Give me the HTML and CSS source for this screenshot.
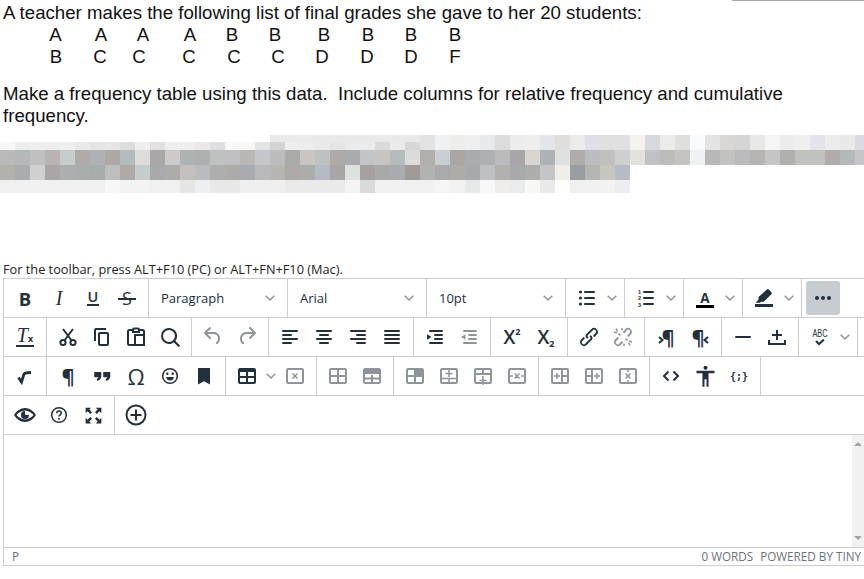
FILE: index.html
```html
<!DOCTYPE html>
<html lang="en">
<head>
<meta charset="utf-8">
<title>Frequency table question</title>
<link rel="stylesheet" href="styles.css">
</head>
<body>
<svg class="sprite" width="0" height="0" aria-hidden="true">
  <symbol id="chev" viewBox="0 0 10 10"><path d="M.7 2.8 5 7l4.3-4.2" fill="none" stroke="currentColor" stroke-width="1.5"/></symbol>
  <symbol id="box" viewBox="0 0 24 24"><rect x="4" y="5" width="16" height="14" rx="1.2" fill="none" stroke="currentColor" stroke-width="2"/></symbol>
</svg>
<div class="topbar"></div>
<div class="question">
  <p class="line">A teacher makes the following list of final grades she gave to her 20 students:</p>
  <div class="grades grades-a"><span>A</span><span>A</span><span>A</span><span>A</span><span>B</span><span>B</span><span>B</span><span>B</span><span>B</span><span>B</span></div>
  <div class="grades grades-b"><span>B</span><span>C</span><span>C</span><span>C</span><span>C</span><span>C</span><span>D</span><span>D</span><span>D</span><span>F</span></div>
  <p class="line para">Make a frequency table using this data.&nbsp; Include columns for relative frequency and cumulative frequency.</p>
</div>
<div class="mosaic" aria-hidden="true">
  <div class="m m0"></div>
  <div class="m m1"></div>
  <div class="m m2"></div>
  <div class="m m3"></div>
  <div class="m m4"></div>
</div>
<div class="hint">For the toolbar, press ALT+F10 (PC) or ALT+FN+F10 (Mac).</div>
<div class="editor">
  <div class="row">
    <div class="grp">
      <div class="b"><span class="tx tx-bold">B</span></div>
      <div class="b"><span class="tx tx-ital">I</span></div>
      <div class="b"><span class="tx tx-under">U</span></div>
      <div class="b"><span class="tx tx-strike">S</span></div>
    </div>
    <div class="grp sel"><span class="sel-label">Paragraph</span><svg class="chev"><use href="#chev"/></svg></div>
    <div class="grp sel"><span class="sel-label">Arial</span><svg class="chev"><use href="#chev"/></svg></div>
    <div class="grp sel"><span class="sel-label">10pt</span><svg class="chev"><use href="#chev"/></svg></div>
    <div class="grp">
      <div class="b"><svg class="ic" viewBox="0 0 24 24"><circle cx="5.500" cy="6" r="1.600"/><circle cx="5.500" cy="12" r="1.600"/><circle cx="5.500" cy="18" r="1.600"/><rect x="9" y="5" width="11" height="2" rx="1"/><rect x="9" y="11" width="11" height="2" rx="1"/><rect x="9" y="17" width="11" height="2" rx="1"/></svg></div>
      <div class="sp"><svg class="chev"><use href="#chev"/></svg></div>
    </div>
    <div class="grp">
      <div class="b"><svg class="ic" viewBox="0 0 24 24"><text class="num"><tspan x="4" y="8">1</tspan><tspan x="4" y="14.300">2</tspan><tspan x="4" y="20.600">3</tspan></text><rect x="9" y="5" width="11" height="2" rx="1"/><rect x="9" y="11" width="11" height="2" rx="1"/><rect x="9" y="17" width="11" height="2" rx="1"/></svg></div>
      <div class="sp"><svg class="chev"><use href="#chev"/></svg></div>
    </div>
    <div class="grp">
      <div class="b"><span class="tx tx-color">A</span></div>
      <div class="sp"><svg class="chev"><use href="#chev"/></svg></div>
    </div>
    <div class="grp">
      <div class="b"><svg class="ic" viewBox="0 0 24 24"><path d="M14.800 3.600a1.500 1.500 0 0 1 2.100 0l2.500 2.600a1.500 1.500 0 0 1 0 2l-7.200 7a2 2 0 0 1-1.600.6l-1.300-.1-1.400 1.100H3.600l3-3.300-.1-1.300a2 2 0 0 1 .6-1.600z"/><rect x="3" y="18" width="18" height="3"/></svg></div>
      <div class="sp"><svg class="chev"><use href="#chev"/></svg></div>
    </div>
    <div class="grp grp-last">
      <div class="b on"><svg class="ic" viewBox="0 0 24 24"><circle cx="6" cy="12" r="2"/><circle cx="12" cy="12" r="2"/><circle cx="18" cy="12" r="2"/></svg></div>
    </div>
  </div>
  <div class="row">
    <div class="grp">
      <div class="b"><span class="tx tx-clear">T<small>x</small></span></div>
    </div>
    <div class="grp">
      <div class="b"><svg class="ic" viewBox="0 0 24 24"><path class="st" d="M7 4l8.200 11M17 4L8.800 15"/><circle class="st" cx="7" cy="17.500" r="2.600"/><circle class="st" cx="17" cy="17.500" r="2.600"/></svg></div>
      <div class="b"><svg class="ic" viewBox="0 0 24 24"><path d="M16 3H6a2 2 0 0 0-2 2v11h2V5h10V3zm1 4a2 2 0 0 1 2 2v10a2 2 0 0 1-2 2h-7a2 2 0 0 1-2-2V9c0-1.200.9-2 2-2h7zm0 12V9h-7v10h7z"/></svg></div>
      <div class="b"><svg class="ic" viewBox="0 0 24 24"><path class="st" d="M8 5H5.500A1.500 1.500 0 0 0 4 6.500v12A1.500 1.500 0 0 0 5.500 20H11M16 5h2.500A1.500 1.500 0 0 1 20 6.500V9"/><path class="st" d="M9 7V4.500a1 1 0 0 1 1-1h4a1 1 0 0 1 1 1V7z"/><rect class="st" x="11" y="10" width="9" height="10"/></svg></div>
      <div class="b"><svg class="ic" viewBox="0 0 24 24"><path d="M16 17.300a8 8 0 1 1 1.400-1.400l4.300 4.400a1 1 0 0 1-1.400 1.400l-4.400-4.300zm-5-.3a6 6 0 1 0 0-12 6 6 0 0 0 0 12z"/></svg></div>
    </div>
    <div class="grp">
      <div class="b off"><svg class="ic" viewBox="0 0 24 24"><path d="M6.400 8H12c3.700 0 6.200 2 6.800 5.100.6 2.700-.4 5.600-2.300 6.800a1 1 0 0 1-1-1.800c1.100-.6 1.800-2.700 1.400-4.600-.5-2.100-2.100-3.500-4.900-3.500H6.400l3.300 3.300a1 1 0 1 1-1.400 1.400l-5-5a1 1 0 0 1 0-1.400l5-5a1 1 0 0 1 1.400 1.400L6.400 8z" transform="translate(0 -1)"/></svg></div>
      <div class="b off"><svg class="ic" viewBox="0 0 24 24"><path d="M17.600 10H12c-2.800 0-4.400 1.400-4.900 3.500-.4 2 .3 4 1.400 4.600a1 1 0 1 1-1 1.800c-2-1.200-2.900-4.100-2.300-6.800.6-3 3-5.100 6.800-5.100h5.600l-3.300-3.300a1 1 0 1 1 1.400-1.400l5 5a1 1 0 0 1 0 1.400l-5 5a1 1 0 0 1-1.400-1.400l3.300-3.300z" transform="translate(0 -1)"/></svg></div>
    </div>
    <div class="grp">
      <div class="b"><svg class="ic" viewBox="0 0 24 24"><rect x="4" y="5" width="16" height="2" rx="1"/><rect x="4" y="9" width="10" height="2" rx="1"/><rect x="4" y="13" width="16" height="2" rx="1"/><rect x="4" y="17" width="10" height="2" rx="1"/></svg></div>
      <div class="b"><svg class="ic" viewBox="0 0 24 24"><rect x="4" y="5" width="16" height="2" rx="1"/><rect x="7" y="9" width="10" height="2" rx="1"/><rect x="4" y="13" width="16" height="2" rx="1"/><rect x="7" y="17" width="10" height="2" rx="1"/></svg></div>
      <div class="b"><svg class="ic" viewBox="0 0 24 24"><rect x="4" y="5" width="16" height="2" rx="1"/><rect x="10" y="9" width="10" height="2" rx="1"/><rect x="4" y="13" width="16" height="2" rx="1"/><rect x="10" y="17" width="10" height="2" rx="1"/></svg></div>
      <div class="b"><svg class="ic" viewBox="0 0 24 24"><rect x="4" y="5" width="16" height="2" rx="1"/><rect x="4" y="9" width="16" height="2" rx="1"/><rect x="4" y="13" width="16" height="2" rx="1"/><rect x="4" y="17" width="16" height="2" rx="1"/></svg></div>
    </div>
    <div class="grp">
      <div class="b"><svg class="ic" viewBox="0 0 24 24"><rect x="6" y="5" width="14" height="2" rx="1"/><rect x="11" y="9" width="9" height="2" rx="1"/><rect x="11" y="13" width="9" height="2" rx="1"/><rect x="6" y="17" width="14" height="2" rx="1"/><path d="M4 9.200 8.500 12 4 14.800z"/></svg></div>
      <div class="b off"><svg class="ic" viewBox="0 0 24 24"><rect x="6" y="5" width="14" height="2" rx="1"/><rect x="11" y="9" width="9" height="2" rx="1"/><rect x="11" y="13" width="9" height="2" rx="1"/><rect x="6" y="17" width="14" height="2" rx="1"/><path d="M8.500 9.200 4 12l4.500 2.800z"/></svg></div>
    </div>
    <div class="grp">
      <div class="b"><span class="tx tx-sup">X<sup>2</sup></span></div>
      <div class="b"><span class="tx tx-sub">X<sub>2</sub></span></div>
    </div>
    <div class="grp">
      <div class="b"><svg class="ic" viewBox="0 0 24 24"><path d="M6.200 12.300a1 1 0 0 1 1.400 1.400l-2 2a2 2 0 1 0 2.800 2.800l4.800-4.800a1 1 0 0 0 0-1.400 1 1 0 1 1 1.400-1.300 2.900 2.900 0 0 1 0 4L9.600 20a3.900 3.900 0 0 1-5.500-5.500l2-2zm11.600-.6a1 1 0 0 1-1.400-1.400l2-2a2 2 0 1 0-2.800-2.800L10.800 10.300a1 1 0 0 0 0 1.400A1 1 0 1 1 9.400 13a2.900 2.900 0 0 1 0-4L14.400 4a3.900 3.900 0 0 1 5.500 5.500l-2 2z"/></svg></div>
      <div class="b off"><svg class="ic" viewBox="0 0 24 24"><path d="M6.200 12.300a1 1 0 0 1 1.400 1.400l-2 2a2 2 0 1 0 2.800 2.800l2.400-2.400 1.400 1.400L9.600 20a3.900 3.900 0 0 1-5.500-5.500l2-2zm11.600-.6a1 1 0 0 1-1.400-1.400l2-2a2 2 0 1 0-2.800-2.800L13.200 8.500 11.800 7.100 14.400 4a3.900 3.900 0 0 1 5.500 5.500l-2 2z"/><path class="st thin" d="M5 3.500l1.500 3M3 7l3 1M19 20.500l-1.500-3M21 17l-3-1M14.500 13.500l2 2M9.500 10.500l-2-2M11 3v2.500M13 18.500V21"/></svg></div>
    </div>
    <div class="grp">
      <div class="b"><span class="tx tx-para tx-para-l">¶</span><svg class="mark mark-l" viewBox="0 0 6 8"><path d="M1 1l3.500 3L1 7" fill="none" stroke="currentColor" stroke-width="2"/></svg></div>
      <div class="b"><span class="tx tx-para tx-para-r">¶</span><svg class="mark mark-r" viewBox="0 0 6 8"><path d="M5 1 1.500 4 5 7" fill="none" stroke="currentColor" stroke-width="2"/></svg></div>
    </div>
    <div class="grp">
      <div class="b"><svg class="ic" viewBox="0 0 24 24"><rect x="4" y="11" width="16" height="2" rx="1"/></svg></div>
      <div class="b"><svg class="ic" viewBox="0 0 24 24"><path d="M11 6h2v4h4v2h-4v4h-2v-4H7v-2h4z" transform="translate(0 -1)"/><path class="st" d="M4 15v4h16v-4"/></svg></div>
    </div>
    <div class="grp">
      <div class="b"><svg class="ic" viewBox="0 0 24 24"><text class="abc" transform="translate(12 12) scale(.7 1)">ABC</text><path class="st" d="M8 16l3 3 5-4.500"/></svg></div>
      <div class="sp"><svg class="chev"><use href="#chev"/></svg></div>
    </div>
  </div>
  <div class="row">
    <div class="grp">
      <div class="b"><svg class="ic" viewBox="0 0 24 24"><path class="st thick" d="M5.500 13.500l3 4.500 2.500-8c1-1 4-1.500 7-1.500"/></svg></div>
    </div>
    <div class="grp">
      <div class="b"><span class="tx tx-para">¶</span></div>
      <div class="b"><svg class="ic" viewBox="0 0 24 24"><path d="M5 8h5.500a.8.800 0 0 1 .8.800V12c0 2.500-1.300 4.200-4 4.800l-.8-1.800c1-.3 1.700-.9 1.800-1.800H5a.8.800 0 0 1-.8-.8V8.800A.8.800 0 0 1 5 8zM14 8h5.500a.8.800 0 0 1 .8.800V12c0 2.500-1.300 4.200-4 4.800l-.8-1.800c1-.3 1.700-.9 1.800-1.800H14a.8.800 0 0 1-.8-.8V8.800A.8.800 0 0 1 14 8z"/></svg></div>
      <div class="b"><span class="tx tx-omega">Ω</span></div>
      <div class="b"><svg class="ic" viewBox="0 0 24 24"><circle class="st thin" cx="12" cy="12" r="7.300"/><circle cx="9.300" cy="9.800" r="1.200"/><circle cx="14.700" cy="9.800" r="1.200"/><path d="M8.200 13h7.600c0 2.300-1.700 3.600-3.800 3.600S8.200 15.300 8.200 13z"/></svg></div>
      <div class="b"><svg class="ic" viewBox="0 0 24 24"><path d="M6 4h12v16.500l-6-3.300-6 3.300z"/></svg></div>
    </div>
    <div class="grp">
      <div class="b"><svg class="ic" viewBox="0 0 24 24"><path d="M19 4a2 2 0 0 1 2 2v12a2 2 0 0 1-2 2H5a2 2 0 0 1-2-2V6c0-1.100.9-2 2-2h14zM5 14v4h6v-4H5zm14 0h-6v4h6v-4zm0-6h-6v4h6V8zM5 12h6V8H5v4z"/></svg></div>
      <div class="sp sp-narrow"><svg class="chev"><use href="#chev"/></svg></div>
      <div class="b off"><svg class="ic" viewBox="0 0 24 24"><use href="#box"/><path class="st thin" d="M9.500 9.500l5 5M14.500 9.500l-5 5"/></svg></div>
    </div>
    <div class="grp">
      <div class="b off"><svg class="ic" viewBox="0 0 24 24"><use href="#box"/><path class="st" d="M4 12h16M12 5v14"/></svg></div>
      <div class="b off"><svg class="ic" viewBox="0 0 24 24"><use href="#box"/><rect x="4" y="5" width="16" height="5"/><path class="st" d="M12 11v8M4 14.500h16"/></svg></div>
    </div>
    <div class="grp">
      <div class="b off"><svg class="ic" viewBox="0 0 24 24"><use href="#box"/><rect x="12" y="5" width="8" height="7"/><path class="st" d="M4 12h16M12 5v14"/></svg></div>
      <div class="b off"><svg class="ic" viewBox="0 0 24 24"><use href="#box"/><path class="st thin" d="M12 5v8M8.500 9.500h7M4 14.500h16M12 15v4"/></svg></div>
      <div class="b off"><svg class="ic" viewBox="0 0 24 24"><use href="#box"/><path class="st" d="M4 10h16M12 5v5"/><path class="st thin" d="M12 12v9M8.500 16.500h7"/></svg></div>
      <div class="b off"><svg class="ic" viewBox="0 0 24 24"><use href="#box"/><path class="st thin" d="M9.500 9.500l5 5M14.500 9.500l-5 5M5 12h3M16 12h3"/></svg></div>
    </div>
    <div class="grp">
      <div class="b off"><svg class="ic" viewBox="0 0 24 24"><use href="#box"/><path class="st" d="M14 5v14M14 12h6"/><path class="st thin" d="M6 12h6M9 9v6"/></svg></div>
      <div class="b off"><svg class="ic" viewBox="0 0 24 24"><use href="#box"/><path class="st" d="M10 5v14M4 12h6"/><path class="st thin" d="M12 12h6M15 9v6"/></svg></div>
      <div class="b off"><svg class="ic" viewBox="0 0 24 24"><use href="#box"/><path class="st thin" d="M9.500 9.500l5 5M14.500 9.500l-5 5M12 6v2M12 16v2"/></svg></div>
    </div>
    <div class="grp">
      <div class="b"><svg class="ic" viewBox="0 0 24 24"><path class="st" d="M9.500 7.500 5 12l4.500 4.500M14.500 7.500 19 12l-4.500 4.500"/></svg></div>
      <div class="b"><svg class="ic ic-lg" viewBox="0 0 24 24"><circle cx="12" cy="4.300" r="1.800"/><path d="M4 6.800h16v2.200h-5.300v12h-1.800v-6.500h-1.800V21H9.300V9H4z"/></svg></div>
      <div class="b"><span class="tx tx-code">{;}</span></div>
    </div>
  </div>
  <div class="row">
    <div class="grp">
      <div class="b"><svg class="ic" viewBox="0 0 24 24"><path d="M12 5C6.500 5 2.700 9.300 1 12c1.700 2.700 5.500 7 11 7s9.300-4.300 11-7c-1.700-2.700-5.500-7-11-7zm0 11.500C8.500 16.500 5.500 14.300 3.500 12 5.500 9.700 8.500 7.500 12 7.500s6.500 2.200 8.500 4.500c-2 2.300-5 4.500-8.500 4.500zM12 8a4 4 0 1 0 4 4h-3a1 1 0 0 1-1-1z"/></svg></div>
      <div class="b"><svg class="ic" viewBox="0 0 24 24"><circle class="st thin" cx="12" cy="12" r="7.300"/><path class="st thin" d="M9.700 10.200c0-1.400 1-2.200 2.300-2.200s2.300.9 2.300 2c0 1.800-2.300 1.800-2.300 3.500"/><circle cx="12" cy="15.800" r="1"/></svg></div>
      <div class="b"><svg class="ic ic-lg" viewBox="0 0 24 24"><path d="M5 5h5L8.300 6.700l2.400 2.400-1.600 1.600-2.400-2.400L5 10zM19 5v5l-1.700-1.700-2.400 2.400-1.600-1.600 2.400-2.400L14 5zM5 19v-5l1.700 1.700 2.400-2.400 1.600 1.600-2.400 2.400L10 19zM19 19h-5l1.700-1.700-2.400-2.400 1.600-1.600 2.400 2.400L19 14z"/></svg></div>
    </div>
    <div class="grp grp-last">
      <div class="b"><svg class="ic" viewBox="0 0 24 24"><circle class="st" cx="12" cy="12" r="9.500"/><path d="M11 6.500h2V11h4.500v2H13v4.500h-2V13H6.500v-2H11z"/></svg></div>
    </div>
  </div>
  <div class="body">
    <div class="scroll"><i class="arrow arrow-up"></i><i class="arrow arrow-down"></i></div>
  </div>
  <div class="status">
    <span>P</span>
    <span class="status-right"><span>0 WORDS</span><span>POWERED BY TINY</span></span>
  </div>
</div>
</body>
</html>
```
FILE: styles.css
```css
* { box-sizing: border-box; }
html, body { margin: 0; padding: 0; }
body { width: 864px; height: 579px; overflow: hidden; background: #fff; color: #222f3e; font-family: "Open Sans", sans-serif; }
.sprite { display: block; height: 0; }
.topbar { width: 132px; height: 2px; margin-left: auto; border-bottom: 1px solid #aaa; margin-top: -1px; }
.question { padding: 1px 0 0 3px; height: 134px; font: 18.67px/22px "Liberation Sans", Arial, sans-serif; color: #111; }
.line { margin: 0; }
.para { margin-top: 15px; width: 800px; }
.grades { display: grid; justify-items: center; line-height: 22px; }
.grades-a { margin-left: 30px; grid-template-columns: 45px 46px 38px 56px 28px 58px 40px 48px 38px 50px; }
.grades-b { margin-left: 31px; grid-template-columns: 44px 44px 34px 66px 24px 64px 24px 66px 22px 66px; }

.mosaic { height: 58px; }
.m { height: 15px; background-repeat: no-repeat; }
.m0 { height: 7px; width: 864px; background-image: linear-gradient(90deg, #fff 0 270px, #e9e9e9 0 420px, #e3e3e3 0 435px, #eff1f3 0 450px, #ededeb 0 465px, #efefef 0 480px, #e7e9ec 0 495px, #dcdcdc 0 510px, #ececec 0 525px, #f0eeec 0 540px, #e3e5e8 0 555px, #dfdedc 0 570px, #ebebeb 0 585px, #dfe0e3 0 600px, #e0e0e0 0 630px, #f5f3f0 0 645px, #d8d9dc 0 660px, #ebebeb 0 675px, #dfdfdb 0 690px, #f9fbfc 0 705px, #e4e3e3 0 720px, #d8d7d4 0 735px, #d5d5d5 0 750px, #e8e8e8 0 765px, #f5f5f5 0 780px, #ececec 0 795px, #efefef 0 810px, #e4e4e8 0 825px, #ebebeb 0 840px, #e8e8e8 0 855px, #dadadf 0 864px); }
.m1 { height: 8px; background-image: linear-gradient(90deg, #f6f6f6 0 15px, #ededed 0 30px, #eee 0 45px, #ededed 0 60px, #eee 0 75px, #e8e8e8 0 90px, #e4e4e4 0 105px, #e6e6e6 0 120px, #ddd 0 135px, #eee 0 150px, #e1dfe1 0 165px, #eee 0 195px, #e9e9e9 0 210px, #dedee0 0 225px, #f6f6f6 0 255px, #e4e4e4 0 270px, #d3d3d3 0 285px, #eee 0 300px, #ececec 0 315px, #eaeaea 0 330px, #e5e5e5 0 345px, #eaebed 0 375px, #dadada 0 390px, #ebebeb 0 405px, #d6d6d6 0 420px, #e3e3e3 0 435px, #eff1f3 0 450px, #ededeb 0 465px, #efefef 0 480px, #e7e9ec 0 495px, #dcdcdc 0 510px, #ececec 0 525px, #f0eeec 0 540px, #e3e5e8 0 555px, #dfdedc 0 570px, #ebebeb 0 585px, #dfe0e3 0 600px, #e0e0e0 0 630px, #f5f3f0 0 645px, #d8d9dc 0 660px, #ebebeb 0 675px, #dfdfdb 0 690px, #f9fbfc 0 705px, #e4e3e3 0 720px, #d8d7d4 0 735px, #d5d5d5 0 750px, #e8e8e8 0 765px, #f5f5f5 0 780px, #ececec 0 795px, #efefef 0 810px, #e4e4e8 0 825px, #ebebeb 0 840px, #e8e8e8 0 855px, #dadadf 0 864px); }
.m2 { background-image: linear-gradient(90deg, #b9b9b9 0 15px, #b3b8bb 0 30px, #c0c0c0 0 45px, #b8b4b1 0 60px, #c8cccc 0 75px, #aeabaa 0 90px, #b0b1b3 0 105px, #aca8a7 0 120px, #b5babd 0 135px, #dcdcda 0 150px, #a9a7a8 0 165px, #cdcbc9 0 180px, #adb2b2 0 195px, #acb1b0 0 210px, #bfc0c0 0 225px, #c0c0c2 0 240px, #bab6b3 0 255px, #c5c5cc 0 270px, #bcbcbc 0 285px, #aaaaa8 0 300px, #c8c5c2 0 315px, #bfc0c3 0 330px, #adabaa 0 345px, #aaabae 0 360px, #c3c4c6 0 375px, #c6c5c3 0 390px, #b5babb 0 405px, #dadbda 0 420px, #b2aeab 0 435px, #c9ced2 0 450px, #aaa6a4 0 465px, #a8acac 0 480px, #aeb0b2 0 495px, #bbb 0 510px, #a8a6a8 0 525px, #d8d5d2 0 540px, #adb3b5 0 555px, #dfe0e0 0 570px, #aeadab 0 585px, #babcbe 0 600px, #c0c1bf 0 615px, #ced0cf 0 630px, #e3e1dd 0 645px, #c0c2c6 0 660px, #bdbcba 0 675px, #c4c3c0 0 690px, #edf1f3 0 705px, #b8b8b8 0 720px, #c2c2c0 0 735px, #bbbabc 0 750px, #b5b4b2 0 765px, #c5c5c8 0 780px, #b0b0ae 0 795px, #c0c2be 0 810px, #c1c1bf 0 825px, #b0acab 0 840px, #b4b8b8 0 855px, #c6c6ca 0 864px); }
.m3 { width: 630px; background-image: linear-gradient(90deg, #b3b1ac 0 15px, #aaadb0 0 30px, #d0d0d0 0 45px, #aaa6a6 0 60px, #acafb0 0 75px, #a9adab 0 90px, #a6abab 0 105px, #bebebe 0 120px, #aeaaa8 0 135px, #c6cbcb 0 150px, #a8a9ab 0 165px, #acacaa 0 180px, #c4c0be 0 195px, #b9bbbe 0 210px, #aeaeae 0 225px, #adaba8 0 240px, #a8acb0 0 255px, #b9b9bb 0 270px, #b7b5b2 0 285px, #afa8a6 0 300px, #acacaa 0 315px, #b6b8c4 0 330px, #a8a6a4 0 345px, #dfe1de 0 360px, #a4a1a0 0 375px, #a9a9a7 0 390px, #aaabae 0 405px, #9e9a98 0 420px, #b0b3b2 0 435px, #aaaaac 0 450px, #b0aba7 0 465px, #a5abad 0 480px, #bec0c3 0 495px, #b3b1ae 0 510px, #a8a9ad 0 525px, #adadaa 0 540px, #c3c5c7 0 555px, #f0eee8 0 570px, #9a9ea0 0 585px, #b4b4b2 0 600px, #c6c5c0 0 615px, #b8bac4 0 630px); }
.m4 { width: 630px; height: 13px; background-image: linear-gradient(90deg, #f0f0f0 0 105px, #f7f7f7 0 120px, #f3f3f3 0 150px, #f0f0f0 0 180px, #e5e5e5 0 195px, #edf0f3 0 210px, #e8e8e8 0 240px, #efefef 0 285px, #eaeaea 0 345px, #f4f4f4 0 360px, #d8dadc 0 375px, #f0f0f0 0 435px, #f5f5f5 0 450px, #f2f2f2 0 465px, #e7e9e8 0 480px, #f8f8f8 0 495px, #efedeb 0 510px, #e9ebee 0 525px, #f7f7f5 0 540px, #e9e9ea 0 555px, #fefefc 0 570px, #f0f0f0 0 585px, #eff1f1 0 600px, #f2f2f0 0 615px, #ecedf0 0 630px); }

.hint { margin-top: 68px; padding-left: 3px; height: 17px; font-size: 12.75px; line-height: 17px; color: #222; white-space: nowrap; }

.editor { margin-left: 3px; width: 861px; height: 288px; border: 1px solid #ccc; border-right: 0; display: flex; flex-direction: column; }
.row { display: flex; height: 39px; border-bottom: 1px solid #ccc; flex: none; }
.grp { display: flex; align-items: flex-start; padding: 2px 4px 0; border-right: 1px solid #ccc; flex: none; }
.grp-last { border-right: 0; }
.b { position: relative; width: 34px; height: 34px; display: flex; align-items: center; justify-content: center; color: #222f3e; border-radius: 3px; flex: none; }
.b.off { color: #8f949b; }
.b.on { background: #c8cbcf; }
.sp { width: 16px; height: 34px; display: flex; align-items: center; justify-content: center; flex: none; }
.sp-narrow { width: 14px; }
.chev { width: 10px; height: 10px; color: #8f949b; flex: none; }
.ic { width: 24px; height: 24px; fill: currentColor; flex: none; overflow: visible; }
.ic-lg { width: 27px; height: 27px; }
.st { fill: none; stroke: currentColor; stroke-width: 2; }
.thin { stroke-width: 1.5; }
.thick { stroke-width: 2.8; }
.sel { width: 139px; align-items: center; padding: 0 12px; justify-content: space-between; height: 38px; }
.sel-label { font-size: 13px; color: #222f3e; }
.num { font: 700 5.5px "Liberation Sans", sans-serif; }
.abc { font: 400 10.5px "Liberation Sans", sans-serif; text-anchor: middle; }

.tx { display: inline-block; color: #222f3e; line-height: 1; }
.tx-bold { font: 700 18.5px "Open Sans", sans-serif; }
.tx-ital { font: italic 400 20px "Liberation Serif", serif; }
.tx-under { font: 600 14.5px/14px "Open Sans", sans-serif; border-bottom: 2px solid currentColor; padding: 0 .5px; }
.tx-strike { position: relative; font: 400 18px "Open Sans", sans-serif; }
.tx-strike::after { content: ""; position: absolute; left: -4px; right: -4px; top: 50%; height: 2px; background: currentColor; }
.tx-color { font: 700 13.5px/14px "Open Sans", sans-serif; width: 18px; text-align: center; border-bottom: 3px solid #000; margin-top: 3px; }
.tx-clear { font: italic 400 20px/17px "Liberation Serif", serif; border-bottom: 2px solid currentColor; padding: 0 1px; }
.tx-clear small { font: 700 9px "Open Sans", sans-serif; }
.tx-sup, .tx-sub { font: 600 19px/19px "Open Sans", sans-serif; }
.tx-sup sup, .tx-sub sub { font: 700 9px "Open Sans", sans-serif; vertical-align: baseline; position: relative; }
.tx-sup sup { top: -9px; }
.tx-sub sub { top: 3px; }
.tx-para { font: 700 20px "Open Sans", sans-serif; }
.tx-para-l { padding-left: 4px; }
.tx-para-r { padding-right: 4px; }
.mark { position: absolute; width: 6px; height: 8px; top: 16px; }
.mark-l { left: 9px; }
.mark-r { right: 8px; }
.tx-omega { font: 400 22px "Open Sans", sans-serif; }
.tx-code { font: 700 10px "DejaVu Sans Mono", monospace; }

.body { flex: 1; display: flex; justify-content: flex-end; }
.scroll { width: 12px; background: #f1f1f1; display: flex; flex-direction: column; justify-content: space-between; align-items: center; padding: 7px 0; }
.arrow { display: block; width: 0; height: 0; border-left: 4px solid transparent; border-right: 4px solid transparent; }
.arrow-up { border-bottom: 4px solid #a3a3a3; }
.arrow-down { border-top: 4px solid #a3a3a3; }
.status { height: 18px; flex: none; border-top: 1px solid #ccc; display: flex; justify-content: space-between; align-items: center; padding: 0 3px 0 8px; font-size: 11.7px; line-height: 17px; color: #6a727d; }
.status-right { display: flex; gap: 7px; }
```
